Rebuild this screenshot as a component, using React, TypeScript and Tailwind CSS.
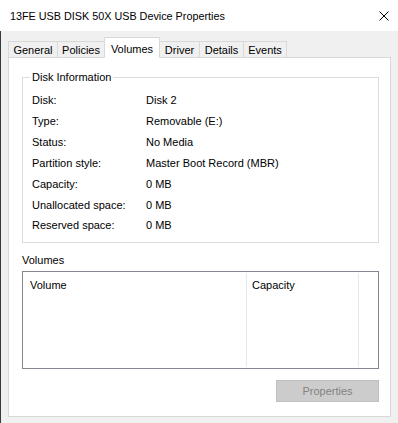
import React from "react";

const rows: [string, string][] = [
  ["Disk:", "Disk 2"],
  ["Type:", "Removable (E:)"],
  ["Status:", "No Media"],
  ["Partition style:", "Master Boot Record (MBR)"],
  ["Capacity:", "0 MB"],
  ["Unallocated space:", "0 MB"],
  ["Reserved space:", "0 MB"],
];

export default function App() {
  return (
    <div
      className="w-[398px] h-[423px] flex flex-col bg-white text-black text-[11px] overflow-hidden"
      style={{ fontFamily: '"Liberation Sans", Arial, sans-serif' }}
    >
      {/* Title bar */}
      <div className="h-[31px] flex items-center justify-between pl-[10px] pr-[9px] bg-white shrink-0">
        <span className="text-[10.8px] leading-none mt-[1px]">13FE USB DISK 50X USB Device Properties</span>
        <svg width="10" height="10" viewBox="0 0 10 10" className="mt-[1px]">
          <path d="M0.5 0.5 L9.5 9.5 M9.5 0.5 L0.5 9.5" stroke="#000" strokeWidth="1" fill="none" />
        </svg>
      </div>

      {/* Body */}
      <div className="flex-1 flex flex-col bg-[#f0f0f0] border-l border-[#3a3a3a]">
        {/* Tabs */}
        <div className="h-[26px] flex items-end pl-[7px] shrink-0">
          <div className="w-[49px] h-[16px] border-l border-t border-[#d9d9d9] flex items-center justify-center pt-[1px]">General</div>
          <div className="w-[47px] h-[16px] border-l border-t border-[#d9d9d9] flex items-center justify-center pt-[1px]">Policies</div>
          <div className="relative z-10 -mb-px w-[56px] h-[21px] border-l border-t border-r border-[#d9d9d9] bg-white flex items-start justify-center pt-[3px]">Volumes</div>
          <div className="w-[39px] h-[16px] border-t border-[#d9d9d9] flex items-center justify-center pt-[1px]">Driver</div>
          <div className="w-[44px] h-[16px] border-l border-t border-[#d9d9d9] flex items-center justify-center pt-[1px]">Details</div>
          <div className="w-[44px] h-[16px] border-l border-t border-r border-[#d9d9d9] flex items-center justify-center pt-[1px]">Events</div>
        </div>

        {/* Panel */}
        <div className="ml-[7px] w-[383px] h-[360px] bg-white border border-[#d9d9d9] pl-[13px] pr-[11px] flex flex-col">
          <fieldset className="mt-[12px] border border-[#dcdcdc] p-0 m-0 min-w-0 pb-[6px]">
            <legend className="ml-[7px] px-[2px] leading-[14px]">Disk Information</legend>
            <div className="flex flex-col pl-[9px] pt-[6px]">
              {rows.map(([k, v], i) => (
                <div key={k} className={(i === 5 ? "h-[20px]" : "h-[21px]") + " flex items-center"}>
                  <span className="w-[114px] shrink-0">{k}</span>
                  <span>{v}</span>
                </div>
              ))}
            </div>
          </fieldset>

          <div className="mt-[10px] leading-[14px]">Volumes</div>

          <div className="mt-[4px] h-[98px] border border-[#828790] flex">
            <div className="w-[224px] border-r border-[#e5eaf0] my-[1px] pl-[7px] pt-[4px]">Volume</div>
            <div className="w-[112px] border-r border-[#e5eaf0] my-[1px] pl-[5px] pt-[4px]">Capacity</div>
            <div className="flex-1" />
          </div>

          <div className="mt-[11px] flex justify-end">
            <div className="w-[103px] h-[22px] bg-[#cccccc] border border-[#bfbfbf] flex items-center justify-center text-[#838383]">
              Properties
            </div>
          </div>
        </div>
      </div>
    </div>
  );
}
